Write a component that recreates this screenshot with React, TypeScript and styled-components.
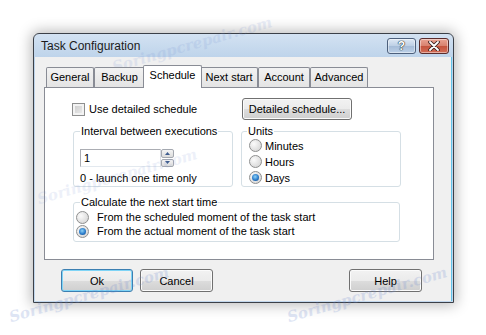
import styled, { createGlobalStyle } from "styled-components"

const Global = createGlobalStyle`
  body {
    margin: 0;
    background: #fff;
    font-family: "Liberation Sans", Arial, sans-serif;
    font-size: 11px;
    color: #000;
  }
`

const Page = styled.div`
  position: relative;
  width: 486px;
  height: 335px;
  overflow: hidden;
  padding: 33px 0 0 33px;
  box-sizing: border-box;
`

const Window = styled.div`
  width: 421px;
  height: 270px;
  box-sizing: border-box;
  display: flex;
  flex-direction: column;
  padding: 0 1px 1px 1px;
  border: 1px solid #3b4048;
  border-radius: 6px 6px 0 0;
  background: linear-gradient(#d3e2f2, #bdd3ea 24px, #c2d7ec);
  box-shadow: 0 0 14px 2px rgba(0, 0, 0, 0.28);
`

const TitleBar = styled.div`
  height: 23px;
  display: flex;
  align-items: center;
  padding: 0 3px 0 6px;
`

const Title = styled.div`
  font-size: 12px;
  color: #1b1b1b;
`

const CaptionButtons = styled.div`
  margin-left: auto;
  display: flex;
  gap: 3px;
`

const CaptionButton = styled.div<{ $close?: boolean }>`
  width: ${(p) => (p.$close ? 30 : 29)}px;
  height: 16px;
  box-sizing: border-box;
  border: 1px solid ${(p) => (p.$close ? "#5a2c2c" : "#4d607c")};
  border-radius: 3px;
  display: flex;
  align-items: center;
  justify-content: center;
  color: #fff;
  font-weight: bold;
  font-size: 12px;
  text-shadow: 0 0 1px #233, 0 0 1px #233, 0 0 1px #233;
  background: ${(p) =>
    p.$close
      ? "linear-gradient(#e9a393, #d8806d 50%, #c4523c 50%, #d26d57)"
      : "linear-gradient(#dfe9f5, #bccfe5 50%, #a5bcd8 50%, #bcd0e7)"};
  box-shadow: inset 0 0 0 1px rgba(255, 255, 255, 0.45);
`

const Client = styled.div`
  flex: 1;
  background: #f0f0f0;
  border-right: 1px solid #62c4ea;
  padding: 8px 0 0 9px;
`

const TabRow = styled.div`
  height: 22px;
  display: flex;
  align-items: flex-end;
  padding-left: 2px;
  position: relative;
  z-index: 1;
`

const Tab = styled.div<{ $w: number; $active?: boolean }>`
  width: ${(p) => p.$w}px;
  box-sizing: border-box;
  height: ${(p) => (p.$active ? 23 : 20)}px;
  margin: ${(p) => (p.$active ? "0 -2px -1px -2px" : "0")};
  padding-bottom: ${(p) => (p.$active ? 4 : 2)}px;
  position: relative;
  z-index: ${(p) => (p.$active ? 2 : 1)};
  border: 1px solid #898c95;
  border-bottom: none;
  border-radius: 2px 2px 0 0;
  background: ${(p) => (p.$active ? "#fff" : "linear-gradient(#f2f2f2, #e4e4e4)")};
  display: flex;
  align-items: center;
  justify-content: center;
  white-space: nowrap;
`

const Panel = styled.div`
  width: 390px;
  height: 173px;
  box-sizing: border-box;
  border: 1px solid #898c95;
  background: #fff;
  padding: 10px 0 0 28px;
`

const Columns = styled.div`
  display: grid;
  grid-template-columns: 160px 160px;
  column-gap: 8px;
`

const TopRow = styled(Columns)`
  height: 22px;
  align-items: center;
`

const CheckRow = styled.label`
  display: flex;
  align-items: center;
  gap: 4px;
  margin-left: -1px;
`

const CheckBox = styled.span`
  width: 13px;
  height: 13px;
  box-sizing: border-box;
  border: 1px solid #8e8f8f;
  background: linear-gradient(135deg, #c9c9c9, #efefef);
  box-shadow: inset 0 0 0 2px #f3f3f3;
`

const Button = styled.button<{ $w: number; $h?: number; $default?: boolean }>`
  width: ${(p) => p.$w}px;
  height: ${(p) => p.$h ?? 23}px;
  box-sizing: border-box;
  padding: 0;
  margin: 0;
  font-family: "Liberation Sans", Arial, sans-serif;
  font-size: 11px;
  color: #000;
  border: 1px solid ${(p) => (p.$default ? "#3c7fb1" : "#707070")};
  border-radius: 3px;
  background: linear-gradient(#f2f2f2, #ebebeb 50%, #dddddd 50%, #cfcfcf);
  box-shadow: inset 0 0 0 1px ${(p) => (p.$default ? "#7fd4f6" : "#fbfbfb")};
`

const DetailButton = styled(Button)`
  margin-left: 1px;
`

const Group = styled.fieldset<{ $inset?: number; $pt: number; $pb: number }>`
  margin: 0;
  min-width: 0;
  border: 1px solid #d5dfe5;
  border-radius: 3px;
  padding: ${(p) => `${p.$pt}px 6px ${p.$pb}px ${p.$inset ?? 6}px`};
  display: flex;
  flex-direction: column;
`

const Legend = styled.legend<{ $shift?: number }>`
  padding: 0 1px;
  margin-left: ${(p) => p.$shift ?? 0}px;
  line-height: 13px;
  font-size: 11px;
`

const Groups = styled(Columns)`
  margin-top: 5px;
`

const CalcGroup = styled(Group)`
  margin-top: 9px;
  width: 327px;
  box-sizing: border-box;
`

const SpinRow = styled.div`
  display: flex;
  height: 18px;
`

const TextInput = styled.div`
  width: 81px;
  height: 18px;
  box-sizing: border-box;
  border: 1px solid #abadb3;
  border-right-color: #dbdfe6;
  border-bottom-color: #e3e9ef;
  padding-left: 3px;
  line-height: 16px;
  background: #fff;
`

const Spin = styled.div`
  width: 13px;
  display: flex;
  flex-direction: column;
  gap: 1px;
`

const SpinHalf = styled.div`
  flex: 1;
  border: 1px solid #a4a8b0;
  border-radius: 2px;
  background: linear-gradient(#f4f4f4, #dcdcdc);
  display: flex;
  align-items: center;
  justify-content: center;
`

const Hint = styled.div`
  margin-top: 5px;
  line-height: 13px;
`

const RadioList = styled.div<{ $row: number }>`
  display: flex;
  flex-direction: column;
  gap: ${(p) => (p.$row === 15 ? 1 : 0)}px;
  & > label {
    height: ${(p) => p.$row}px;
  }
`

const RadioRow = styled.label<{ $gap: number }>`
  display: flex;
  align-items: center;
  gap: ${(p) => p.$gap}px;
`

const RadioDot = styled.span<{ $on?: boolean }>`
  width: 13px;
  height: 13px;
  box-sizing: border-box;
  border-radius: 50%;
  border: 1px solid #8e8f8f;
  background: radial-gradient(circle at 35% 35%, #fbfbfb, #cfcfcf);
  display: flex;
  align-items: center;
  justify-content: center;
  &::after {
    content: "";
    display: ${(p) => (p.$on ? "block" : "none")};
    width: 7px;
    height: 7px;
    border-radius: 50%;
    background: radial-gradient(circle at 45% 40%, #8fd3f7, #2b7ccb 55%, #0c3d78);
  }
`

const Footer = styled.div`
  width: 390px;
  box-sizing: border-box;
  display: flex;
  gap: 7px;
  padding: 9px 12px 0 17px;
  & > :last-child {
    margin-left: auto;
  }
`

const Watermark = styled.div<{ $x: number; $y: number; $o: number }>`
  position: absolute;
  left: ${(p) => p.$x}px;
  top: ${(p) => p.$y}px;
  transform: rotate(-16deg);
  transform-origin: left bottom;
  font-family: "DejaVu Serif", serif;
  font-style: italic;
  font-weight: bold;
  font-size: 15px;
  color: #6f8bd0;
  opacity: ${(p) => p.$o};
  pointer-events: none;
  white-space: nowrap;
`

const tabs = [
  { label: "General", w: 48 },
  { label: "Backup", w: 51 },
  { label: "Schedule", w: 59, active: true },
  { label: "Next start", w: 58 },
  { label: "Account", w: 52 },
  { label: "Advanced", w: 58 },
]

function Radio({ on, label, gap }: { on?: boolean; label: string; gap: number }) {
  return (
    <RadioRow $gap={gap}>
      <RadioDot $on={on} />
      {label}
    </RadioRow>
  )
}

export default function App() {
  return (
    <Page>
      <Global />
      <Window>
        <TitleBar>
          <Title>Task Configuration</Title>
          <CaptionButtons>
            <CaptionButton>?</CaptionButton>
            <CaptionButton $close>
              <svg width="12" height="10" viewBox="0 0 12 10">
                <path d="M2 1 L10 9 M10 1 L2 9" stroke="#3a2020" strokeWidth="3.6" strokeLinecap="round" />
                <path d="M2 1 L10 9 M10 1 L2 9" stroke="#fff" strokeWidth="1.8" strokeLinecap="round" />
              </svg>
            </CaptionButton>
          </CaptionButtons>
        </TitleBar>
        <Client>
          <TabRow>
            {tabs.map((t) => (
              <Tab key={t.label} $w={t.w} $active={t.active}>
                {t.label}
              </Tab>
            ))}
          </TabRow>
          <Panel>
            <TopRow>
              <CheckRow>
                <CheckBox />
                Use detailed schedule
              </CheckRow>
              <DetailButton $w={110} $h={22}>
                Detailed schedule...
              </DetailButton>
            </TopRow>
            <Groups>
              <Group $pt={11} $pb={1}>
                <Legend>Interval between executions</Legend>
                <SpinRow>
                  <TextInput>1</TextInput>
                  <Spin>
                    <SpinHalf>
                      <svg width="5" height="3" viewBox="0 0 5 3">
                        <path d="M0 3 L2.5 0 L5 3 Z" fill="#3f5d8f" />
                      </svg>
                    </SpinHalf>
                    <SpinHalf>
                      <svg width="5" height="3" viewBox="0 0 5 3">
                        <path d="M0 0 L2.5 3 L5 0 Z" fill="#3f5d8f" />
                      </svg>
                    </SpinHalf>
                  </Spin>
                </SpinRow>
                <Hint>0 - launch one time only</Hint>
              </Group>
              <Group $pt={0} $pb={1} $inset={7}>
                <Legend $shift={-2}>Units</Legend>
                <RadioList $row={15}>
                  <Radio label="Minutes" gap={3} />
                  <Radio label="Hours" gap={3} />
                  <Radio label="Days" gap={3} on />
                </RadioList>
              </Group>
            </Groups>
            <CalcGroup $pt={1} $pb={3} $inset={2}>
              <Legend $shift={4}>Calculate the next start time</Legend>
              <RadioList $row={14}>
                <Radio label="From the scheduled moment of the task start" gap={8} />
                <Radio label="From the actual moment of the task start" gap={8} on />
              </RadioList>
            </CalcGroup>
          </Panel>
          <Footer>
            <Button $w={72} $default>
              Ok
            </Button>
            <Button $w={73}>Cancel</Button>
            <Button $w={73}>Help</Button>
          </Footer>
        </Client>
      </Window>
      <Watermark $x={115} $y={58} $o={0.14}>Soringpcrepair.com</Watermark>
      <Watermark $x={40} $y={190} $o={0.12}>Soringpcrepair.com</Watermark>
      <Watermark $x={12} $y={308} $o={0.22}>Soringpcrepair.com</Watermark>
      <Watermark $x={290} $y={308} $o={0.22}>Soringpcrepair.com</Watermark>
    </Page>
  )
}
